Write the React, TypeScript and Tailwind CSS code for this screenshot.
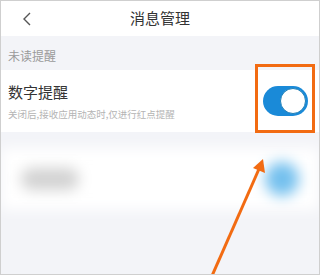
export default function App() {
  return (
    <div
      className="relative w-[320px] h-[275px] overflow-hidden border border-[#cfcfcf] bg-[#f3f4f8]"
      style={{ fontFamily: '"Noto Sans CJK SC", "Noto Sans", sans-serif' }}
    >
      {/* header */}
      <div className="relative flex h-[35px] items-center justify-center bg-white">
        <svg className="absolute left-[21px] top-[10px]" width="10" height="16" viewBox="0 0 10 16">
          <path d="M8 2 L2 8 L8 14" fill="none" stroke="#555" strokeWidth="1.4" />
        </svg>
        <span className="text-[15px] text-[#333]">消息管理</span>
      </div>

      {/* section label */}
      <div className="flex h-[34px] items-center px-[7px] pt-[6px] text-[12px] text-[#9a9a9a]">未读提醒</div>

      {/* row */}
      <div className="flex h-[62px] items-center justify-between bg-white pl-[7px] pr-[11px]">
        <div className="flex flex-col">
          <span className="text-[15px] leading-[20px] text-[#333]">数字提醒</span>
          <span className="mt-[6px] text-[9.5px] leading-[12px] text-[#b4b4b4]">关闭后,接收应用动态时,仅进行红点提醒</span>
        </div>
        <div className="flex h-[30px] w-[45px] items-center justify-end rounded-full bg-[#1a8ad8] pr-[2px]">
          <div className="h-[26px] w-[26px] rounded-full border border-[#1f7fb8] bg-white" />
        </div>
      </div>

      {/* blurred row */}
      <div className="mt-[16px] flex h-[62px] items-center justify-between bg-white px-[20px] blur-[7px]">
        <div className="h-[22px] w-[58px] rounded-full bg-[#d2d2d2]" />
        <div className="h-[34px] w-[34px] rounded-full bg-[#74c0ee]" />
      </div>

      {/* annotation box */}
      <div className="absolute left-[254px] top-[63px] h-[69px] w-[60px] border-[3px] border-[#f26b12]" />

      {/* arrow */}
      <svg className="absolute left-0 top-0" width="320" height="275" viewBox="0 0 320 275">
        <line x1="210.5" y1="276" x2="258" y2="168" stroke="#f26b12" strokeWidth="3" />
        <polygon points="262,158 264,172 252,167" fill="#f26b12" />
      </svg>
    </div>
  );
}
